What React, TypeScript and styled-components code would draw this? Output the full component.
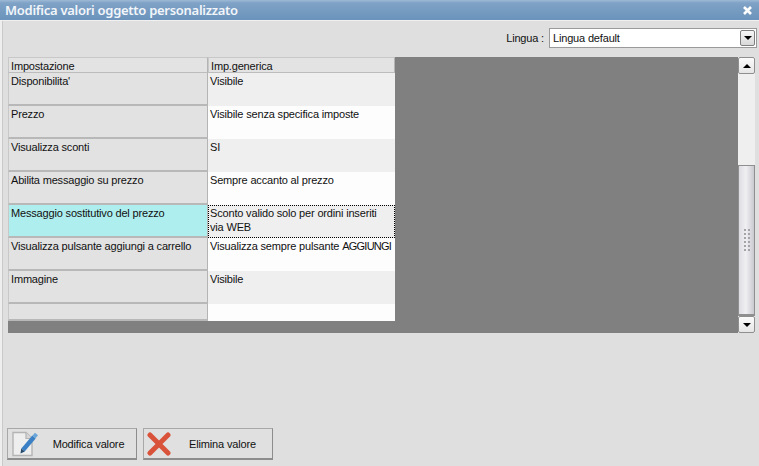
import styled, { createGlobalStyle } from "styled-components";

const GlobalStyle = createGlobalStyle`
    html, body {
        margin: 0;
        padding: 0;
        background: #dfdfdf;
    }
`;

type Row = { label: string; value: string; caps?: string; height?: number };

const rows: Row[] = [
    { label: "Disponibilita'", value: "Visibile" },
    { label: "Prezzo", value: "Visibile senza specifica imposte" },
    { label: "Visualizza sconti", value: "SI" },
    { label: "Abilita messaggio su prezzo", value: "Sempre accanto al prezzo" },
    { label: "Messaggio sostitutivo del prezzo", value: "Sconto valido solo per ordini inseriti via WEB" },
    { label: "Visualizza pulsante aggiungi a carrello", value: "Visualizza sempre pulsante ", caps: "AGGIUNGI" },
    { label: "Immagine", value: "Visibile" },
    { label: "", value: "", height: 17 },
];

const SELECTED = 4;

const Window = styled.div`
    width: 759px;
    height: 466px;
    display: flex;
    flex-direction: column;
    overflow: hidden;
    background: #dfdfdf;
    font-family: "Liberation Sans", Arial, sans-serif;
    font-size: 11px;
    letter-spacing: -0.17px;
    color: #111;
`;

const TitleBar = styled.div`
    height: 20px;
    flex: none;
    box-sizing: border-box;
    padding: 0 6px 0 5px;
    display: flex;
    align-items: center;
    justify-content: space-between;
    background: linear-gradient(#9db9d6 0, #7fa2c6 3px, #6b93bb 100%);
    color: #f2f6fa;
    font-family: "Noto Sans", sans-serif;
    font-size: 13px;
    font-weight: 600;
    letter-spacing: -0.28px;
`;

const Body = styled.div`
    flex: 1;
    display: flex;
    flex-direction: column;
    min-height: 0;
    padding: 0 4px 0 8px;
    border-top: 1px solid #f1f1f1;
    background: linear-gradient(90deg, #eeeeee 0, #eeeeee 2px, #c9c9c9 2px, #c9c9c9 3px, #dfdfdf 3px);
`;

const LangBar = styled.div`
    height: 36px;
    display: flex;
    justify-content: flex-end;
    align-items: center;
    gap: 5px;
    padding-bottom: 2px;
    box-sizing: border-box;
`;

const Select = styled.div`
    width: 208px;
    height: 20px;
    margin-right: -2px;
    box-sizing: border-box;
    border: 1px solid #9a9a9a;
    background: #fff;
    display: flex;
    align-items: center;
    justify-content: space-between;
    padding: 0 1px 0 3px;
`;

const ArrowButton = styled.div`
    width: 15px;
    height: 16px;
    box-sizing: border-box;
    border: 1px solid #7f7f7f;
    border-radius: 2px;
    background: linear-gradient(#f7f7f7, #d8d8d8);
    display: flex;
    align-items: center;
    justify-content: center;
`;

const Arrow = styled.span<{ $up?: boolean }>`
    width: 0;
    height: 0;
    border-left: 4px solid transparent;
    border-right: 4px solid transparent;
    ${(p) => (p.$up ? "border-bottom: 4px solid #000;" : "border-top: 4px solid #000;")}
`;

const GridFrame = styled.div`
    height: 276px;
    display: flex;
    background: #808080;
`;

const Grid = styled.div`
    width: 387px;
    height: 264px;
    flex: none;
    display: grid;
    grid-template-columns: 200px 187px;
    grid-auto-rows: min-content;
    align-content: start;
`;

const Cell = styled.div`
    box-sizing: border-box;
    padding: 1px 0 1px 2px;
    line-height: 14px;
    overflow: hidden;
`;

const HeadCell = styled(Cell)`
    height: 16px;
    background: #e3e3e3;
    border-top: 1px solid #c8c8c8;
    border-right: 1px solid #b4b4b4;
    border-bottom: 1px solid #bcbcbc;
    border-left: 1px solid #c8c8c8;
`;

const LabelCell = styled(Cell)<{ $selected: boolean; $height: number }>`
    height: ${(p) => p.$height}px;
    background: ${(p) => (p.$selected ? "#aeeeee" : "#e2e2e2")};
    border-left: 1px solid #c8c8c8;
    border-right: 1px solid #b4b4b4;
    border-bottom: 2px solid #b8b8b8;
`;

const ValueCell = styled(Cell)<{ $alt: boolean; $selected: boolean; $height: number }>`
    height: ${(p) => p.$height}px;
    background: ${(p) => (p.$alt ? "#efefef" : "#fdfdfd")};
    ${(p) => p.$selected && "outline: 1px dotted #000; outline-offset: -1px; border: 1px dotted #000; padding: 0 3px 0 1px;"}
`;

// the capitals run narrower in the original font
const Caps = styled.span`
    letter-spacing: -0.75px;
`;

const ScrollBar = styled.div`
    width: 17px;
    margin-left: auto;
    flex: none;
    display: flex;
    flex-direction: column;
    background: #efefef;
`;

const ScrollButton = styled.div`
    height: 17px;
    flex: none;
    box-sizing: border-box;
    border: 1px solid #8f8f8f;
    border-radius: 2px;
    background: linear-gradient(#fbfbfb, #e6e6e6);
    display: flex;
    align-items: center;
    justify-content: center;
`;

const ScrollTrack = styled.div`
    flex: 1;
    display: flex;
    flex-direction: column;
    justify-content: flex-end;
`;

const ScrollThumb = styled.div`
    height: 151px;
    box-sizing: border-box;
    border: 1px solid #8f8f8f;
    border-bottom-width: 2px;
    background: linear-gradient(90deg, #dcdce2, #f0f0f3 45%, #c9c9d0);
    display: flex;
    align-items: center;
    justify-content: center;
`;

const Grip = styled.div`
    width: 7px;
    height: 24px;
    background-image: radial-gradient(#a4a4a8 1px, transparent 1px);
    background-size: 4px 4px;
`;

const Actions = styled.div`
    margin: auto 0 6px -1px;
    display: flex;
    gap: 6px;
`;

const ActionButton = styled.button`
    width: 130px;
    height: 32px;
    box-sizing: border-box;
    border: 1px solid #a8a8a8;
    border-right-color: #8d8d8d;
    border-bottom: 2px solid #8d8d8d;
    background: #e0e0e0;
    padding: 0 0 0 3px;
    display: flex;
    align-items: center;
    font-family: inherit;
    font-size: 11px;
    letter-spacing: -0.15px;
    color: #111;
`;

const ButtonLabel = styled.span`
    flex: 1;
    text-align: center;
    padding-left: 2px;
`;

function CloseIcon() {
    return (
        <svg width="11" height="11" viewBox="0 0 11 11">
            <path d="M2 2 L9 9 M9 2 L2 9" stroke="#fff" strokeWidth="2.6" />
        </svg>
    );
}

function EditIcon() {
    return (
        <svg width="28" height="26" viewBox="0 0 28 26">
            <path d="M2 1.5 H15 L21 7.5 V24.5 H2 Z" fill="#eeeeee" stroke="#b4b4b4" strokeWidth="1.4" />
            <path d="M15 1.5 V7.5 H21" fill="#d6d6d6" stroke="#b4b4b4" strokeWidth="1.2" />
            <path d="M12 19 L23 6" stroke="#3b80c4" strokeWidth="4.4" />
            <path d="M23 6 L25.5 3" stroke="#6aa5da" strokeWidth="4" />
            <path d="M9.5 22.5 L10.2 17.6 L13.8 20.6 Z" fill="#27496b" />
        </svg>
    );
}

function DeleteIcon() {
    return (
        <svg width="24" height="24" viewBox="0 0 24 24">
            <path d="M3 3 L21 21 M21 3 L3 21" stroke="#d9523a" strokeWidth="5" strokeLinecap="round" />
        </svg>
    );
}

export default function App() {
    return (
        <Window>
            <GlobalStyle />
            <TitleBar>
                <span>Modifica valori oggetto personalizzato</span>
                <CloseIcon />
            </TitleBar>
            <Body>
                <LangBar>
                    <span>Lingua :</span>
                    <Select>
                        <span>Lingua default</span>
                        <ArrowButton>
                            <Arrow />
                        </ArrowButton>
                    </Select>
                </LangBar>
                <GridFrame>
                    <Grid>
                        <HeadCell>Impostazione</HeadCell>
                        <HeadCell>Imp.generica</HeadCell>
                        {rows.map((row, i) => {
                            const height = row.height ?? 33;
                            return [
                                <LabelCell key={`l${i}`} $selected={i === SELECTED} $height={height}>
                                    {row.label}
                                </LabelCell>,
                                <ValueCell key={`v${i}`} $alt={i % 2 === 0} $selected={i === SELECTED} $height={height}>
                                    {row.value}
                                    {row.caps && <Caps>{row.caps}</Caps>}
                                </ValueCell>,
                            ];
                        })}
                    </Grid>
                    <ScrollBar>
                        <ScrollButton>
                            <Arrow $up />
                        </ScrollButton>
                        <ScrollTrack>
                            <ScrollThumb>
                                <Grip />
                            </ScrollThumb>
                        </ScrollTrack>
                        <ScrollButton>
                            <Arrow />
                        </ScrollButton>
                    </ScrollBar>
                </GridFrame>
                <Actions>
                    <ActionButton>
                        <EditIcon />
                        <ButtonLabel>Modifica valore</ButtonLabel>
                    </ActionButton>
                    <ActionButton>
                        <DeleteIcon />
                        <ButtonLabel>Elimina valore</ButtonLabel>
                    </ActionButton>
                </Actions>
            </Body>
        </Window>
    );
}
